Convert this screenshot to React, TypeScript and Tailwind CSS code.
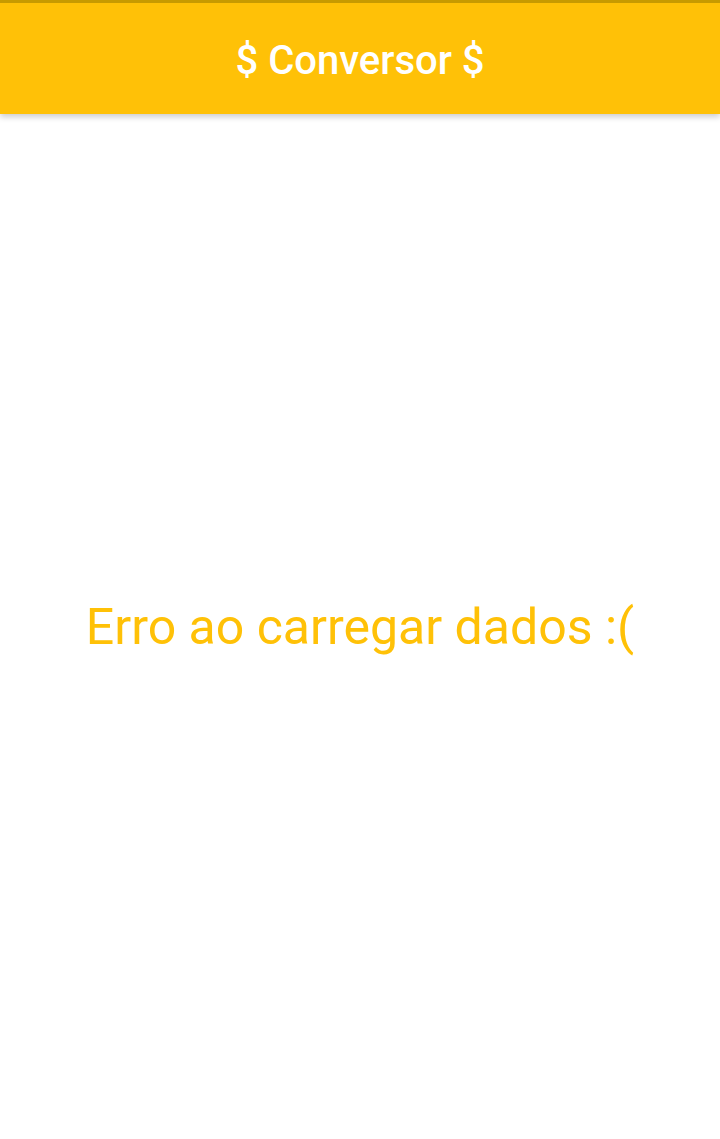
export default function App() {
  return (
    <div className="h-[1139px] w-full flex flex-col bg-white" style={{ fontFamily: "Roboto, sans-serif" }}>
      <header className="relative z-10 h-[114px] bg-[#ffc107] border-t-[3px] border-[#c79a00] shadow-[0_3px_6px_rgba(0,0,0,0.2)] flex items-center justify-center">
        <h1 className="text-white text-[40px] font-medium leading-none pt-[4px]">$ Conversor $</h1>
      </header>
      <main className="flex-1 flex items-center justify-center">
        <p className="text-[#ffc107] text-[50px] leading-none">Erro ao carregar dados :(</p>
      </main>
    </div>
  );
}
